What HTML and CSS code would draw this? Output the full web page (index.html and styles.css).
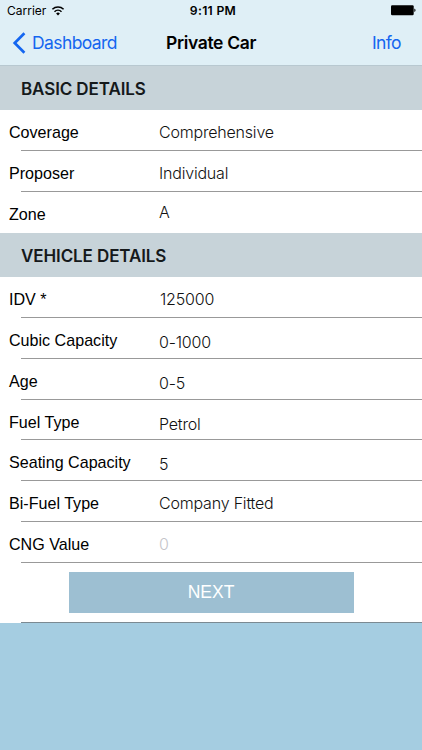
FILE: index.html
```html
<!DOCTYPE html>
<html lang="en">
<head>
    <meta charset="UTF-8">
    <meta name="viewport" content="width=device-width, initial-scale=1.0">
    <title>Private Car</title>
    <link rel="stylesheet" href="styles.css">
</head>
<body>
    <header>
        <div class="status-bar">
            <div class="carrier">
                <span>Carrier</span>
                <svg class="wifi" viewBox="0 0 14 10" width="14" height="10">
                    <path d="M1.4 3.3a8.2 8.2 0 0 1 11.2 0M3.5 5.7a5 5 0 0 1 7 0" fill="none" stroke="#000" stroke-width="1.5"/>
                    <path d="M7 9.5L5.1 7.5a2.7 2.7 0 0 1 3.8 0z"/>
                </svg>
            </div>
            <span class="time">9:11 PM</span>
            <svg class="battery" viewBox="0 0 26 11" width="26" height="11">
                <rect x="1" y="0.3" width="22.7" height="10" rx="1.2"/>
                <path d="M24.3 3.6c1.7.5 1.7 2.9 0 3.4z"/>
            </svg>
        </div>
        <nav>
            <a class="back">
                <svg viewBox="0 0 14 22" width="14" height="22">
                    <path d="M12.4 1.3L2.7 11l9.7 9.7" fill="none" stroke="#1466f0" stroke-width="2.7"/>
                </svg>
                <span>Dashboard</span>
            </a>
            <h1>Private Car</h1>
            <a class="info">Info</a>
        </nav>
    </header>

    <main>
        <h2>BASIC DETAILS</h2>
        <div class="rows">
            <div class="row"><label>Coverage</label><span class="value">Comprehensive</span></div>
            <div class="row"><label>Proposer</label><span class="value">Individual</span></div>
            <div class="row last"><label>Zone</label><span class="value high">A</span></div>
        </div>

        <h2>VEHICLE DETAILS</h2>
        <div class="rows">
            <div class="row"><label>IDV *</label><span class="value number">125000</span></div>
            <div class="row"><label>Cubic Capacity</label><span class="value low">0-1000</span></div>
            <div class="row"><label>Age</label><span class="value low">0-5</span></div>
            <div class="row"><label>Fuel Type</label><span class="value low">Petrol</span></div>
            <div class="row"><label>Seating Capacity</label><span class="value low">5</span></div>
            <div class="row"><label>Bi-Fuel Type</label><span class="value">Company Fitted</span></div>
            <div class="row"><label>CNG Value</label><span class="value empty">0</span></div>
        </div>

        <div class="actions">
            <button>NEXT</button>
        </div>
    </main>
</body>
</html>
```

FILE: styles.css
```css
* {
    margin: 0;
    padding: 0;
    box-sizing: border-box;
}

body {
    height: 750px;
    background: #a5cde1;
    font-family: "Liberation Sans", Arial, sans-serif;
    color: #000;
    overflow: hidden;
}

header {
    height: 66px;
    background: #dfeff6;
    border-bottom: 1px solid #b8c8d0;
    font-family: Inter, sans-serif;
}

.status-bar {
    display: grid;
    grid-template-columns: 1fr auto 1fr;
    align-items: center;
    height: 21px;
    padding: 0 6px 0 7px;
    font-size: 12px;
}

.carrier {
    display: flex;
    align-items: center;
    gap: 5px;
}

.time {
    padding-left: 3px;
    font-weight: 600;
    font-size: 12.2px;
    letter-spacing: 0.3px;
}

.battery {
    justify-self: end;
}

nav {
    display: grid;
    grid-template-columns: 1fr auto 1fr;
    align-items: center;
    height: 43px;
    padding: 0 12px;
    font-size: 17.5px;
}

.back, .info {
    color: #1466f0;
    letter-spacing: -0.6px;
}

.back {
    display: flex;
    align-items: center;
    gap: 6px;
}

.info {
    justify-self: end;
    margin-right: 9px;
}

h1 {
    font-size: 17.5px;
    font-weight: 600;
    letter-spacing: -0.35px;
}

main {
    background: #fff;
}

h2 {
    height: 44.4px;
    padding-left: 21px;
    background: #c7d3d9;
    font-family: Inter, sans-serif;
    font-size: 17px;
    font-weight: 600;
    line-height: 46px;
    letter-spacing: -0.1px;
    color: #15191b;
}

/* separators start at the section title inset */
.row {
    display: grid;
    grid-template-columns: 150px 1fr;
    height: 40.8px;
    padding-left: 9px;
    font-size: 16.1px;
    line-height: 44px;
    background: linear-gradient(#999, #999) 21px 100% / 100% 1px no-repeat;
}

.row.last {
    background: none;
}

.value {
    font-family: Inter, sans-serif;
    font-weight: 300;
    font-size: 16px;
    line-height: 45px;
    letter-spacing: -0.2px;
    color: #111;
}

.number {
    padding-left: 1px;
}

.high {
    line-height: 41px;
}

.low {
    line-height: 49px;
}

.empty {
    color: #c5c5ca;
}

.actions {
    display: flex;
    justify-content: center;
    height: 60.6px;
    padding-top: 9.6px;
    background: linear-gradient(#7b8a92, #7b8a92) 21px 100% / 100% 1px no-repeat;
}

button {
    width: 285px;
    height: 41px;
    border: none;
    background: #9dbfd2;
    color: #fff;
    font-family: "Liberation Sans", Arial, sans-serif;
    font-size: 17.5px;
}
```
